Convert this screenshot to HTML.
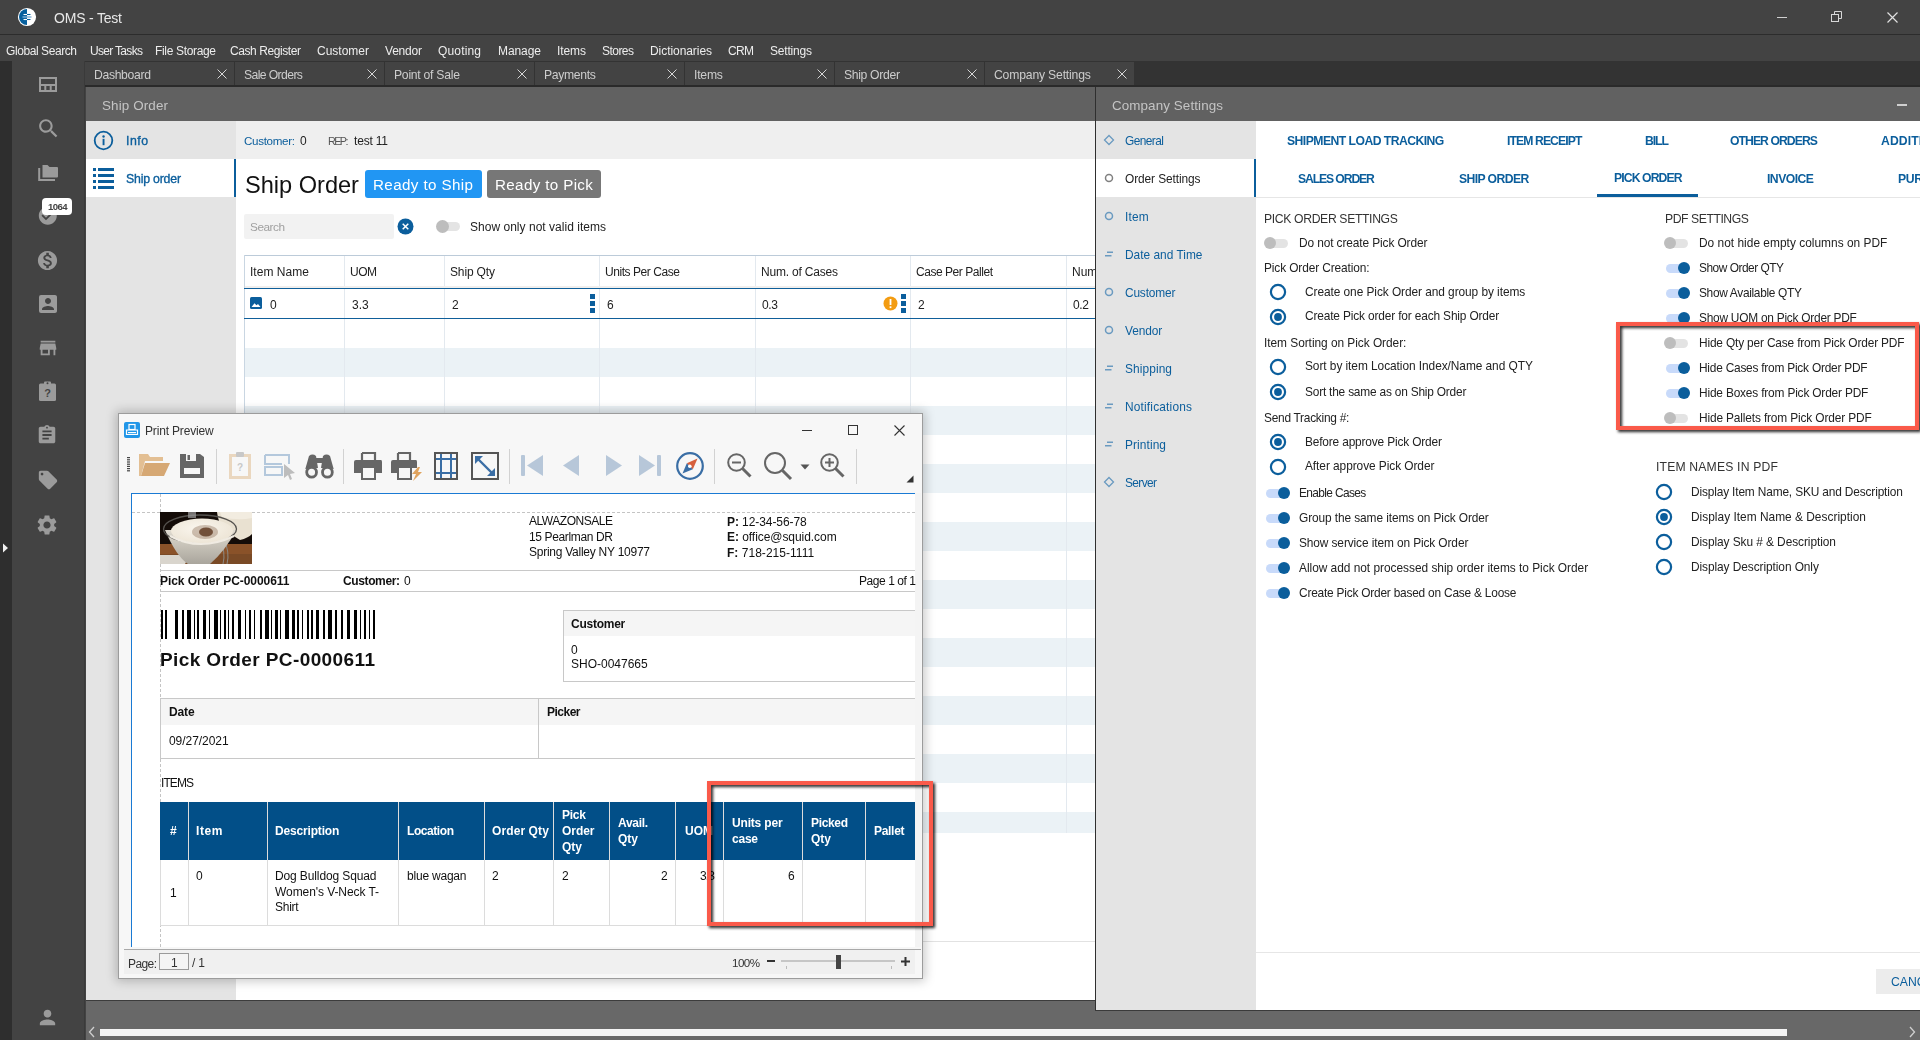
<!DOCTYPE html>
<html><head><meta charset="utf-8"><title>OMS - Test</title>
<style>
html,body{margin:0;padding:0;width:1920px;height:1040px;overflow:hidden;background:#434343;}
body{position:relative;font-family:"Liberation Sans",sans-serif;-webkit-font-smoothing:antialiased;}
.t{will-change:transform;}
.r{position:absolute;display:block;}
.t{position:absolute;white-space:nowrap;line-height:1;}
svg.r{overflow:visible;}
</style></head><body>
<div class="r" style="left:0px;top:0px;width:1920px;height:34px;background:#434343;"></div>
<div class="r" style="left:0px;top:34px;width:1920px;height:1px;background:#2c2c2c;"></div>
<div class="r" style="left:0px;top:35px;width:1920px;height:26px;background:#434343;"></div>
<svg class="r" style="left:17px;top:7px;" width="20" height="20" viewBox="0 0 20 20"><circle cx="10" cy="10" r="9.1" fill="#ffffff"/><path d="M10 2 A8 8 0 0 0 10 18 Z" fill="#07609e"/><path d="M6.5 7.5 H10" stroke="#fff" stroke-width="1.1"/><path d="M10 7.5 H13.5" stroke="#07609e" stroke-width="1.1"/><path d="M5.5 10 H14.5" stroke="#7fb0d6" stroke-width="1.4"/><path d="M6.5 12.5 H10" stroke="#fff" stroke-width="1.1"/><path d="M10 12.5 H13.5" stroke="#07609e" stroke-width="1.1"/></svg>
<div class="t" style="left:54.00px;top:11.00px;font-size:14px;color:#e8e8e8;font-weight:normal;letter-spacing:-0.194px;">OMS - Test</div>
<div class="r" style="left:1777px;top:17px;width:10px;height:1px;background:#d0d0d0;"></div>
<svg class="r" style="left:1831px;top:11px;" width="12" height="12" viewBox="0 0 12 12"><rect x="0.5" y="3.5" width="7" height="7" fill="none" stroke="#d8d8d8"/><path d="M3.5 3.5 V0.5 H10.5 V7.5 H7.5" fill="none" stroke="#d8d8d8"/></svg>
<svg class="r" style="left:1887px;top:12px;" width="11" height="11" viewBox="0 0 11 11"><path d="M0.5 0.5 L10.5 10.5 M10.5 0.5 L0.5 10.5" stroke="#e0e0e0" stroke-width="1.2"/></svg>
<div class="t" style="left:6.00px;top:45.00px;font-size:12px;color:#ededed;font-weight:normal;letter-spacing:-0.420px;">Global Search</div>
<div class="t" style="left:90.00px;top:45.00px;font-size:12px;color:#ededed;font-weight:normal;letter-spacing:-0.680px;">User Tasks</div>
<div class="t" style="left:155.00px;top:45.00px;font-size:12px;color:#ededed;font-weight:normal;letter-spacing:-0.337px;">File Storage</div>
<div class="t" style="left:230.00px;top:45.00px;font-size:12px;color:#ededed;font-weight:normal;letter-spacing:-0.419px;">Cash Register</div>
<div class="t" style="left:317.00px;top:45.00px;font-size:12px;color:#ededed;font-weight:normal;letter-spacing:-0.003px;">Customer</div>
<div class="t" style="left:385.00px;top:45.00px;font-size:12px;color:#ededed;font-weight:normal;letter-spacing:-0.206px;">Vendor</div>
<div class="t" style="left:438.00px;top:45.00px;font-size:12px;color:#ededed;font-weight:normal;letter-spacing:0.163px;">Quoting</div>
<div class="t" style="left:498.00px;top:45.00px;font-size:12px;color:#ededed;font-weight:normal;letter-spacing:-0.074px;">Manage</div>
<div class="t" style="left:557.00px;top:45.00px;font-size:12px;color:#ededed;font-weight:normal;letter-spacing:-0.085px;">Items</div>
<div class="t" style="left:602.00px;top:45.00px;font-size:12px;color:#ededed;font-weight:normal;letter-spacing:-0.536px;">Stores</div>
<div class="t" style="left:650.00px;top:45.00px;font-size:12px;color:#ededed;font-weight:normal;letter-spacing:-0.063px;">Dictionaries</div>
<div class="t" style="left:728.00px;top:45.00px;font-size:12px;color:#ededed;font-weight:normal;letter-spacing:-0.662px;">CRM</div>
<div class="t" style="left:770.00px;top:45.00px;font-size:12px;color:#ededed;font-weight:normal;letter-spacing:-0.194px;">Settings</div>
<div class="r" style="left:0px;top:61px;width:12px;height:979px;background:#2e2e2e;"></div>
<div class="r" style="left:12px;top:61px;width:73px;height:979px;background:#434343;"></div>
<div class="r" style="left:84px;top:61px;width:1px;height:979px;background:#3a3a3a;"></div>
<div class="r" style="left:85px;top:61px;width:1835px;height:26px;background:#333333;"></div>
<div class="r" style="left:85px;top:62px;width:149px;height:23px;background:#434343;"></div>
<div class="t" style="left:93.50px;top:69.00px;font-size:12.2px;color:#cdcdcd;font-weight:normal;letter-spacing:-0.335px;">Dashboard</div>
<svg class="r" style="left:217px;top:69px;" width="10" height="10" viewBox="0 0 10 10"><path d="M0.5 0.5 L9.5 9.5 M9.5 0.5 L0.5 9.5" stroke="#d6d6d6" stroke-width="1"/></svg>
<div class="r" style="left:235px;top:62px;width:149px;height:23px;background:#434343;"></div>
<div class="t" style="left:243.50px;top:69.00px;font-size:12.2px;color:#cdcdcd;font-weight:normal;letter-spacing:-0.609px;">Sale Orders</div>
<svg class="r" style="left:367px;top:69px;" width="10" height="10" viewBox="0 0 10 10"><path d="M0.5 0.5 L9.5 9.5 M9.5 0.5 L0.5 9.5" stroke="#d6d6d6" stroke-width="1"/></svg>
<div class="r" style="left:385px;top:62px;width:149px;height:23px;background:#434343;"></div>
<div class="t" style="left:393.50px;top:69.00px;font-size:12.2px;color:#cdcdcd;font-weight:normal;letter-spacing:-0.265px;">Point of Sale</div>
<svg class="r" style="left:517px;top:69px;" width="10" height="10" viewBox="0 0 10 10"><path d="M0.5 0.5 L9.5 9.5 M9.5 0.5 L0.5 9.5" stroke="#d6d6d6" stroke-width="1"/></svg>
<div class="r" style="left:535px;top:62px;width:149px;height:23px;background:#434343;"></div>
<div class="t" style="left:543.50px;top:69.00px;font-size:12.2px;color:#cdcdcd;font-weight:normal;letter-spacing:-0.320px;">Payments</div>
<svg class="r" style="left:667px;top:69px;" width="10" height="10" viewBox="0 0 10 10"><path d="M0.5 0.5 L9.5 9.5 M9.5 0.5 L0.5 9.5" stroke="#d6d6d6" stroke-width="1"/></svg>
<div class="r" style="left:685px;top:62px;width:149px;height:23px;background:#434343;"></div>
<div class="t" style="left:693.50px;top:69.00px;font-size:12.2px;color:#cdcdcd;font-weight:normal;letter-spacing:-0.207px;">Items</div>
<svg class="r" style="left:817px;top:69px;" width="10" height="10" viewBox="0 0 10 10"><path d="M0.5 0.5 L9.5 9.5 M9.5 0.5 L0.5 9.5" stroke="#d6d6d6" stroke-width="1"/></svg>
<div class="r" style="left:835px;top:62px;width:149px;height:23px;background:#434343;"></div>
<div class="t" style="left:843.50px;top:69.00px;font-size:12.2px;color:#cdcdcd;font-weight:normal;letter-spacing:-0.332px;">Ship Order</div>
<svg class="r" style="left:967px;top:69px;" width="10" height="10" viewBox="0 0 10 10"><path d="M0.5 0.5 L9.5 9.5 M9.5 0.5 L0.5 9.5" stroke="#d6d6d6" stroke-width="1"/></svg>
<div class="r" style="left:985px;top:62px;width:149px;height:23px;background:#434343;"></div>
<div class="t" style="left:993.50px;top:69.00px;font-size:12.2px;color:#cdcdcd;font-weight:normal;letter-spacing:-0.179px;">Company Settings</div>
<svg class="r" style="left:1117px;top:69px;" width="10" height="10" viewBox="0 0 10 10"><path d="M0.5 0.5 L9.5 9.5 M9.5 0.5 L0.5 9.5" stroke="#d6d6d6" stroke-width="1"/></svg>
<div class="r" style="left:85px;top:85px;width:1835px;height:2px;background:#2a2a2a;"></div>
<div class="r" style="left:86px;top:87px;width:1009px;height:34px;background:#616161;"></div>
<div class="t" style="left:102.00px;top:99.00px;font-size:13.4px;color:#c4c4c4;font-weight:normal;letter-spacing:0.135px;">Ship Order</div>
<div class="r" style="left:86px;top:121px;width:1009px;height:879px;background:#ffffff;"></div>
<div class="r" style="left:86px;top:121px;width:150px;height:879px;background:#e4e4e4;"></div>
<div class="r" style="left:86px;top:159px;width:148px;height:38px;background:#ffffff;"></div>
<div class="r" style="left:234px;top:159px;width:2px;height:38px;background:#0b5e9c;"></div>
<div class="r" style="left:236px;top:121px;width:859px;height:38px;background:#efefef;"></div>
<svg class="r" style="left:93px;top:130px;" width="21" height="21" viewBox="0 0 21 21"><circle cx="10.5" cy="10.5" r="8.8" fill="none" stroke="#0b5e9c" stroke-width="1.8"/><rect x="9.6" y="8.8" width="1.9" height="6.4" fill="#0b5e9c"/><circle cx="10.55" cy="6.5" r="1.2" fill="#0b5e9c"/></svg>
<div class="t" style="left:126.00px;top:135.00px;font-size:12.3px;color:#0b5e9c;font-weight:normal;letter-spacing:0.495px;-webkit-text-stroke:0.35px #0b5e9c">Info</div>
<svg class="r" style="left:93px;top:168px;" width="21" height="21" viewBox="0 0 21 21"><g fill="#0b5e9c"><rect x="0" y="0" width="3" height="3"/><rect x="5" y="0" width="16" height="3"/><rect x="0" y="6" width="3" height="3"/><rect x="5" y="6" width="16" height="3"/><rect x="0" y="12" width="3" height="3"/><rect x="5" y="12" width="16" height="3"/><rect x="0" y="18" width="3" height="3"/><rect x="5" y="18" width="16" height="3"/></g></svg>
<div class="t" style="left:126.00px;top:173.00px;font-size:12.3px;color:#0b5e9c;font-weight:normal;letter-spacing:-0.195px;-webkit-text-stroke:0.35px #0b5e9c">Ship order</div>
<div class="t" style="left:244.00px;top:135.00px;font-size:11.6px;color:#0b5e9c;font-weight:normal;letter-spacing:-0.312px;">Customer:</div>
<div class="t" style="left:300.00px;top:135.00px;font-size:12px;color:#222;font-weight:normal;">0</div>
<div class="t" style="left:327.50px;top:136.00px;font-size:10.8px;color:#555;font-weight:normal;letter-spacing:-1.569px;">REP:</div>
<div class="t" style="left:354.00px;top:135.00px;font-size:12px;color:#222;font-weight:normal;letter-spacing:-0.189px;">test 11</div>
<div class="t" style="left:245.00px;top:174.00px;font-size:23.6px;color:#111;font-weight:normal;letter-spacing:-0.012px;">Ship Order</div>
<div class="r" style="left:365px;top:170px;width:117px;height:28px;background:#2196f3;border-radius:3px"></div>
<div class="t" style="left:373.40px;top:177.00px;font-size:15.2px;color:#ffffff;font-weight:normal;letter-spacing:0.376px;">Ready to Ship</div>
<div class="r" style="left:487px;top:170px;width:114px;height:28px;background:#777777;border-radius:3px"></div>
<div class="t" style="left:495.40px;top:177.00px;font-size:15.2px;color:#ffffff;font-weight:normal;letter-spacing:0.350px;">Ready to Pick</div>
<div class="r" style="left:244px;top:214px;width:150px;height:25px;background:#f2f2f2;border-radius:2px"></div>
<div class="t" style="left:250.00px;top:222.00px;font-size:11.8px;color:#a0a0a0;font-weight:normal;letter-spacing:-0.476px;">Search</div>
<svg class="r" style="left:397px;top:218px;" width="17" height="17" viewBox="0 0 17 17"><circle cx="8.5" cy="8.5" r="8" fill="#0b5e9c"/><path d="M5.7 5.7 L11.3 11.3 M11.3 5.7 L5.7 11.3" stroke="#fff" stroke-width="1.5"/></svg>
<div class="r" style="left:437px;top:222px;width:23px;height:9px;background:#e4e4e4;border-radius:5px"></div>
<div class="r" style="left:436px;top:220px;width:13px;height:13px;border-radius:50%;background:#bdbdbd"></div>
<div class="t" style="left:470.00px;top:221.00px;font-size:12px;color:#222;font-weight:normal;letter-spacing:0.025px;">Show only not valid items</div>
<div class="r" style="left:244px;top:255px;width:851px;height:1px;background:#bccbd9;"></div>
<div class="r" style="left:244px;top:255px;width:1px;height:578px;background:#c9d6e2;"></div>
<div class="t" style="left:250.00px;top:266.00px;font-size:12px;color:#222;font-weight:normal;letter-spacing:0.040px;">Item Name</div>
<div class="t" style="left:350.00px;top:266.00px;font-size:12px;color:#222;font-weight:normal;letter-spacing:-0.498px;">UOM</div>
<div class="t" style="left:450.00px;top:266.00px;font-size:12px;color:#222;font-weight:normal;letter-spacing:-0.146px;">Ship Qty</div>
<div class="t" style="left:605.00px;top:266.00px;font-size:12px;color:#222;font-weight:normal;letter-spacing:-0.438px;">Units Per Case</div>
<div class="t" style="left:761.00px;top:266.00px;font-size:12px;color:#222;font-weight:normal;letter-spacing:-0.196px;">Num. of Cases</div>
<div class="t" style="left:916.00px;top:266.00px;font-size:12px;color:#222;font-weight:normal;letter-spacing:-0.455px;">Case Per Pallet</div>
<div class="t" style="left:1072.00px;top:266.00px;font-size:12px;color:#222;font-weight:normal;">Num</div>
<div class="r" style="left:245px;top:348px;width:850px;height:29px;background:#ebf2f6;"></div>
<div class="r" style="left:245px;top:406px;width:850px;height:29px;background:#ebf2f6;"></div>
<div class="r" style="left:245px;top:464px;width:850px;height:29px;background:#ebf2f6;"></div>
<div class="r" style="left:245px;top:522px;width:850px;height:29px;background:#ebf2f6;"></div>
<div class="r" style="left:245px;top:580px;width:850px;height:29px;background:#ebf2f6;"></div>
<div class="r" style="left:245px;top:638px;width:850px;height:29px;background:#ebf2f6;"></div>
<div class="r" style="left:245px;top:696px;width:850px;height:29px;background:#ebf2f6;"></div>
<div class="r" style="left:245px;top:754px;width:850px;height:29px;background:#ebf2f6;"></div>
<div class="r" style="left:245px;top:812px;width:850px;height:21px;background:#ebf2f6;"></div>
<div class="r" style="left:344px;top:256px;width:1px;height:577px;background:#e3e9ef;"></div>
<div class="r" style="left:444px;top:256px;width:1px;height:577px;background:#e3e9ef;"></div>
<div class="r" style="left:599px;top:256px;width:1px;height:577px;background:#e3e9ef;"></div>
<div class="r" style="left:755px;top:256px;width:1px;height:577px;background:#e3e9ef;"></div>
<div class="r" style="left:910px;top:256px;width:1px;height:577px;background:#e3e9ef;"></div>
<div class="r" style="left:1066px;top:256px;width:1px;height:577px;background:#e3e9ef;"></div>
<div class="r" style="left:245px;top:286px;width:850px;height:2px;background:#f1efed;"></div>
<div class="r" style="left:244px;top:288px;width:851px;height:1px;background:#0f5f9a;"></div>
<div class="r" style="left:244px;top:318px;width:851px;height:1px;background:#0f5f9a;"></div>
<svg class="r" style="left:250px;top:297px;" width="13" height="13" viewBox="0 0 13 13"><rect x="0" y="0" width="12" height="12" rx="1.5" fill="#0b5e9c"/><path d="M1.5 10 L4.5 6.2 L6.5 8.2 L8 7 L10.5 10 Z" fill="#fff"/></svg>
<div class="t" style="left:269.50px;top:299.00px;font-size:12px;color:#222;font-weight:normal;">0</div>
<div class="t" style="left:352.00px;top:299.00px;font-size:12px;color:#222;font-weight:normal;">3.3</div>
<div class="t" style="left:451.50px;top:299.00px;font-size:12px;color:#222;font-weight:normal;">2</div>
<svg class="r" style="left:590px;top:294px;" width="5" height="19" viewBox="0 0 5 19"><rect x="0" y="0" width="5" height="5" fill="#0b5e9c"/><rect x="0" y="7" width="5" height="5" fill="#0b5e9c"/><rect x="0" y="14" width="5" height="5" fill="#0b5e9c"/></svg>
<div class="t" style="left:606.50px;top:299.00px;font-size:12px;color:#222;font-weight:normal;">6</div>
<div class="t" style="left:762.00px;top:299.00px;font-size:12px;color:#222;font-weight:normal;letter-spacing:-0.340px;">0.3</div>
<svg class="r" style="left:883px;top:296px;" width="15" height="15" viewBox="0 0 15 15"><circle cx="7.5" cy="7.5" r="7" fill="#f39c12"/><rect x="6.6" y="3" width="1.8" height="6" fill="#fff"/><rect x="6.6" y="10.3" width="1.8" height="1.8" fill="#fff"/></svg>
<svg class="r" style="left:901px;top:294px;" width="5" height="19" viewBox="0 0 5 19"><rect x="0" y="0" width="5" height="5" fill="#0b5e9c"/><rect x="0" y="7" width="5" height="5" fill="#0b5e9c"/><rect x="0" y="14" width="5" height="5" fill="#0b5e9c"/></svg>
<div class="t" style="left:917.50px;top:299.00px;font-size:12px;color:#222;font-weight:normal;">2</div>
<div class="t" style="left:1073.00px;top:299.00px;font-size:12px;color:#222;font-weight:normal;letter-spacing:-0.340px;">0.2</div>
<div class="r" style="left:236px;top:941px;width:859px;height:1px;background:#e2e2e2;"></div>
<div class="r" style="left:1095px;top:87px;width:1px;height:924px;background:#2f2f2f;"></div>
<div class="r" style="left:86px;top:1001px;width:1009px;height:39px;background:#686868;"></div>
<div class="r" style="left:86px;top:1000px;width:1009px;height:1px;background:#3c3c3c;"></div>
<div class="r" style="left:1096px;top:87px;width:824px;height:34px;background:#616161;"></div>
<div class="t" style="left:1112.00px;top:99.00px;font-size:13.4px;color:#c4c4c4;font-weight:normal;letter-spacing:0.101px;">Company Settings</div>
<div class="r" style="left:1897px;top:104px;width:10px;height:2px;background:#cfcfcf;"></div>
<div class="r" style="left:1096px;top:121px;width:824px;height:889px;background:#ffffff;"></div>
<div class="r" style="left:1096px;top:121px;width:160px;height:889px;background:#e4e4e4;"></div>
<div class="r" style="left:1096px;top:159px;width:158px;height:38px;background:#ffffff;"></div>
<div class="r" style="left:1254px;top:159px;width:2px;height:38px;background:#0b5e9c;"></div>
<div class="r" style="left:1086px;top:1011px;width:834px;height:29px;background:#686868;"></div>
<div class="r" style="left:1095px;top:1010px;width:825px;height:1px;background:#3a3a3a;"></div>
<svg class="r" style="left:1103px;top:134px;" width="12" height="12" viewBox="0 0 12 12"><path d="M6 1.5 L10.5 6 L6 10.5 L1.5 6 Z" fill="none" stroke="#6a9ac0" stroke-width="1.3"/></svg>
<div class="t" style="left:1124.50px;top:136.00px;font-size:11.9px;color:#0b5e9c;font-weight:normal;letter-spacing:-0.557px;">General</div>
<svg class="r" style="left:1103px;top:172px;" width="12" height="12" viewBox="0 0 12 12"><circle cx="6" cy="6" r="3.5" fill="none" stroke="#808080" stroke-width="1.5"/></svg>
<div class="t" style="left:1124.50px;top:174.00px;font-size:11.9px;color:#222;font-weight:normal;letter-spacing:-0.086px;">Order Settings</div>
<svg class="r" style="left:1103px;top:210px;" width="12" height="12" viewBox="0 0 12 12"><circle cx="6" cy="6" r="3.5" fill="none" stroke="#6a9ac0" stroke-width="1.5"/></svg>
<div class="t" style="left:1124.50px;top:212.00px;font-size:11.9px;color:#0b5e9c;font-weight:normal;letter-spacing:0.185px;">Item</div>
<svg class="r" style="left:1103px;top:248px;" width="12" height="12" viewBox="0 0 12 12"><path d="M4 4.3 H10 M2 7.7 H8.5" stroke="#6a9ac0" stroke-width="1.4"/></svg>
<div class="t" style="left:1124.50px;top:250.00px;font-size:11.9px;color:#0b5e9c;font-weight:normal;letter-spacing:0.010px;">Date and Time</div>
<svg class="r" style="left:1103px;top:286px;" width="12" height="12" viewBox="0 0 12 12"><circle cx="6" cy="6" r="3.5" fill="none" stroke="#6a9ac0" stroke-width="1.5"/></svg>
<div class="t" style="left:1124.50px;top:288.00px;font-size:11.9px;color:#0b5e9c;font-weight:normal;letter-spacing:-0.170px;">Customer</div>
<svg class="r" style="left:1103px;top:324px;" width="12" height="12" viewBox="0 0 12 12"><circle cx="6" cy="6" r="3.5" fill="none" stroke="#6a9ac0" stroke-width="1.5"/></svg>
<div class="t" style="left:1124.50px;top:326.00px;font-size:11.9px;color:#0b5e9c;font-weight:normal;letter-spacing:-0.082px;">Vendor</div>
<svg class="r" style="left:1103px;top:362px;" width="12" height="12" viewBox="0 0 12 12"><path d="M4 4.3 H10 M2 7.7 H8.5" stroke="#6a9ac0" stroke-width="1.4"/></svg>
<div class="t" style="left:1124.50px;top:364.00px;font-size:11.9px;color:#0b5e9c;font-weight:normal;letter-spacing:0.098px;">Shipping</div>
<svg class="r" style="left:1103px;top:400px;" width="12" height="12" viewBox="0 0 12 12"><path d="M4 4.3 H10 M2 7.7 H8.5" stroke="#6a9ac0" stroke-width="1.4"/></svg>
<div class="t" style="left:1124.50px;top:402.00px;font-size:11.9px;color:#0b5e9c;font-weight:normal;letter-spacing:0.182px;">Notifications</div>
<svg class="r" style="left:1103px;top:438px;" width="12" height="12" viewBox="0 0 12 12"><path d="M4 4.3 H10 M2 7.7 H8.5" stroke="#6a9ac0" stroke-width="1.4"/></svg>
<div class="t" style="left:1124.50px;top:440.00px;font-size:11.9px;color:#0b5e9c;font-weight:normal;letter-spacing:0.092px;">Printing</div>
<svg class="r" style="left:1103px;top:476px;" width="12" height="12" viewBox="0 0 12 12"><path d="M6 1.5 L10.5 6 L6 10.5 L1.5 6 Z" fill="none" stroke="#6a9ac0" stroke-width="1.3"/></svg>
<div class="t" style="left:1124.50px;top:478.00px;font-size:11.9px;color:#0b5e9c;font-weight:normal;letter-spacing:-0.609px;">Server</div>
<div class="t" style="left:1287.00px;top:135.00px;font-size:12.2px;color:#0b5e9c;font-weight:bold;letter-spacing:-0.536px;">SHIPMENT LOAD TRACKING</div>
<div class="t" style="left:1507.00px;top:135.00px;font-size:12.2px;color:#0b5e9c;font-weight:bold;letter-spacing:-0.901px;">ITEM RECEIPT</div>
<div class="t" style="left:1645.00px;top:135.00px;font-size:12.2px;color:#0b5e9c;font-weight:bold;letter-spacing:-1.036px;">BILL</div>
<div class="t" style="left:1730.00px;top:135.00px;font-size:12.2px;color:#0b5e9c;font-weight:bold;letter-spacing:-0.935px;">OTHER ORDERS</div>
<div class="t" style="left:1881.00px;top:135.00px;font-size:12.2px;color:#0b5e9c;font-weight:bold;letter-spacing:0.086px;">ADDITIONAL</div>
<div class="t" style="left:1298.00px;top:173.00px;font-size:12.2px;color:#0b5e9c;font-weight:bold;letter-spacing:-1.112px;">SALES ORDER</div>
<div class="t" style="left:1459.00px;top:173.00px;font-size:12.2px;color:#0b5e9c;font-weight:bold;letter-spacing:-0.600px;">SHIP ORDER</div>
<div class="t" style="left:1614.00px;top:172.00px;font-size:12.2px;color:#0b5e9c;font-weight:bold;letter-spacing:-0.888px;">PICK ORDER</div>
<div class="t" style="left:1767.00px;top:173.00px;font-size:12.2px;color:#0b5e9c;font-weight:bold;letter-spacing:-0.528px;">INVOICE</div>
<div class="t" style="left:1898.00px;top:173.00px;font-size:12.2px;color:#0b5e9c;font-weight:bold;letter-spacing:-0.352px;">PURCHASE</div>
<div class="r" style="left:1597px;top:194px;width:101px;height:3px;background:#0b5e9c;"></div>
<div class="r" style="left:1256px;top:197px;width:664px;height:1px;background:#e6e6e6;"></div>
<div class="t" style="left:1264.00px;top:213.00px;font-size:12.2px;color:#333;font-weight:normal;letter-spacing:-0.351px;">PICK ORDER SETTINGS</div>
<div class="r" style="left:1268px;top:238.5px;width:20px;height:9px;background:#e3e3e3;border-radius:5px"></div>
<div class="r" style="left:1264px;top:237px;width:12px;height:12px;border-radius:50%;background:#bdbdbd"></div>
<div class="t" style="left:1298.50px;top:238.00px;font-size:11.9px;color:#222;font-weight:normal;letter-spacing:-0.106px;">Do not create Pick Order</div>
<div class="t" style="left:1264.00px;top:263.00px;font-size:11.9px;color:#222;font-weight:normal;letter-spacing:-0.116px;">Pick Order Creation:</div>
<svg class="r" style="left:1269px;top:282.5px;" width="18" height="18" viewBox="0 0 18 18"><circle cx="9" cy="9" r="7.1" fill="#fff" stroke="#0b5e9c" stroke-width="2.2"/></svg>
<div class="t" style="left:1304.60px;top:287.00px;font-size:11.9px;color:#222;font-weight:normal;letter-spacing:-0.064px;">Create one Pick Order and group by items</div>
<svg class="r" style="left:1269px;top:307.5px;" width="18" height="18" viewBox="0 0 18 18"><circle cx="9" cy="9" r="7.1" fill="#fff" stroke="#0b5e9c" stroke-width="2.2"/><circle cx="9" cy="9" r="3.9" fill="#0b5e9c"/></svg>
<div class="t" style="left:1304.60px;top:311.00px;font-size:11.9px;color:#222;font-weight:normal;letter-spacing:-0.148px;">Create Pick order for each Ship Order</div>
<div class="t" style="left:1264.00px;top:338.00px;font-size:11.9px;color:#222;font-weight:normal;letter-spacing:-0.039px;">Item Sorting on Pick Order:</div>
<svg class="r" style="left:1269px;top:357.5px;" width="18" height="18" viewBox="0 0 18 18"><circle cx="9" cy="9" r="7.1" fill="#fff" stroke="#0b5e9c" stroke-width="2.2"/></svg>
<div class="t" style="left:1304.60px;top:361.00px;font-size:11.9px;color:#222;font-weight:normal;letter-spacing:-0.056px;">Sort by item Location Index/Name and QTY</div>
<svg class="r" style="left:1269px;top:382.5px;" width="18" height="18" viewBox="0 0 18 18"><circle cx="9" cy="9" r="7.1" fill="#fff" stroke="#0b5e9c" stroke-width="2.2"/><circle cx="9" cy="9" r="3.9" fill="#0b5e9c"/></svg>
<div class="t" style="left:1304.60px;top:387.00px;font-size:11.9px;color:#222;font-weight:normal;letter-spacing:-0.202px;">Sort the same as on Ship Order</div>
<div class="t" style="left:1264.00px;top:413.00px;font-size:11.9px;color:#222;font-weight:normal;letter-spacing:-0.260px;">Send Tracking #:</div>
<svg class="r" style="left:1269px;top:432.5px;" width="18" height="18" viewBox="0 0 18 18"><circle cx="9" cy="9" r="7.1" fill="#fff" stroke="#0b5e9c" stroke-width="2.2"/><circle cx="9" cy="9" r="3.9" fill="#0b5e9c"/></svg>
<div class="t" style="left:1304.60px;top:437.00px;font-size:11.9px;color:#222;font-weight:normal;letter-spacing:-0.162px;">Before approve Pick Order</div>
<svg class="r" style="left:1269px;top:457.5px;" width="18" height="18" viewBox="0 0 18 18"><circle cx="9" cy="9" r="7.1" fill="#fff" stroke="#0b5e9c" stroke-width="2.2"/></svg>
<div class="t" style="left:1304.60px;top:461.00px;font-size:11.9px;color:#222;font-weight:normal;letter-spacing:-0.063px;">After approve Pick Order</div>
<div class="r" style="left:1266px;top:488.5px;width:20px;height:9px;background:#c8dafa;border-radius:5px"></div>
<div class="r" style="left:1278px;top:487px;width:12px;height:12px;border-radius:50%;background:#0b5e9c"></div>
<div class="t" style="left:1298.50px;top:488.00px;font-size:11.9px;color:#222;font-weight:normal;letter-spacing:-0.617px;">Enable Cases</div>
<div class="r" style="left:1266px;top:513.5px;width:20px;height:9px;background:#c8dafa;border-radius:5px"></div>
<div class="r" style="left:1278px;top:512px;width:12px;height:12px;border-radius:50%;background:#0b5e9c"></div>
<div class="t" style="left:1298.50px;top:513.00px;font-size:11.9px;color:#222;font-weight:normal;letter-spacing:-0.095px;">Group the same items on Pick Order</div>
<div class="r" style="left:1266px;top:538.5px;width:20px;height:9px;background:#c8dafa;border-radius:5px"></div>
<div class="r" style="left:1278px;top:537px;width:12px;height:12px;border-radius:50%;background:#0b5e9c"></div>
<div class="t" style="left:1298.50px;top:538.00px;font-size:11.9px;color:#222;font-weight:normal;letter-spacing:-0.104px;">Show service item on Pick Order</div>
<div class="r" style="left:1266px;top:563.5px;width:20px;height:9px;background:#c8dafa;border-radius:5px"></div>
<div class="r" style="left:1278px;top:562px;width:12px;height:12px;border-radius:50%;background:#0b5e9c"></div>
<div class="t" style="left:1298.50px;top:563.00px;font-size:11.9px;color:#222;font-weight:normal;letter-spacing:-0.018px;">Allow add not processed ship order items to Pick Order</div>
<div class="r" style="left:1266px;top:588.5px;width:20px;height:9px;background:#c8dafa;border-radius:5px"></div>
<div class="r" style="left:1278px;top:587px;width:12px;height:12px;border-radius:50%;background:#0b5e9c"></div>
<div class="t" style="left:1298.50px;top:588.00px;font-size:11.9px;color:#222;font-weight:normal;letter-spacing:-0.210px;">Create Pick Order based on Case &amp; Loose</div>
<div class="t" style="left:1664.80px;top:213.00px;font-size:12.2px;color:#333;font-weight:normal;letter-spacing:-0.436px;">PDF SETTINGS</div>
<div class="r" style="left:1668px;top:238.5px;width:20px;height:9px;background:#e3e3e3;border-radius:5px"></div>
<div class="r" style="left:1664px;top:237px;width:12px;height:12px;border-radius:50%;background:#bdbdbd"></div>
<div class="t" style="left:1698.50px;top:238.00px;font-size:11.9px;color:#222;font-weight:normal;letter-spacing:0.021px;">Do not hide empty columns on PDF</div>
<div class="r" style="left:1666px;top:263.5px;width:20px;height:9px;background:#c8dafa;border-radius:5px"></div>
<div class="r" style="left:1678px;top:262px;width:12px;height:12px;border-radius:50%;background:#0b5e9c"></div>
<div class="t" style="left:1698.50px;top:263.00px;font-size:11.9px;color:#222;font-weight:normal;letter-spacing:-0.482px;">Show Order QTY</div>
<div class="r" style="left:1666px;top:288.5px;width:20px;height:9px;background:#c8dafa;border-radius:5px"></div>
<div class="r" style="left:1678px;top:287px;width:12px;height:12px;border-radius:50%;background:#0b5e9c"></div>
<div class="t" style="left:1698.50px;top:288.00px;font-size:11.9px;color:#222;font-weight:normal;letter-spacing:-0.310px;">Show Available QTY</div>
<div class="r" style="left:1666px;top:313.5px;width:20px;height:9px;background:#c8dafa;border-radius:5px"></div>
<div class="r" style="left:1678px;top:312px;width:12px;height:12px;border-radius:50%;background:#0b5e9c"></div>
<div class="t" style="left:1698.50px;top:313.00px;font-size:11.9px;color:#222;font-weight:normal;letter-spacing:-0.240px;">Show UOM on Pick Order PDF</div>
<div class="r" style="left:1668px;top:338.5px;width:20px;height:9px;background:#e3e3e3;border-radius:5px"></div>
<div class="r" style="left:1664px;top:337px;width:12px;height:12px;border-radius:50%;background:#bdbdbd"></div>
<div class="t" style="left:1698.50px;top:338.00px;font-size:11.9px;color:#222;font-weight:normal;letter-spacing:-0.164px;">Hide Qty per Case from Pick Order PDF</div>
<div class="r" style="left:1666px;top:363.5px;width:20px;height:9px;background:#c8dafa;border-radius:5px"></div>
<div class="r" style="left:1678px;top:362px;width:12px;height:12px;border-radius:50%;background:#0b5e9c"></div>
<div class="t" style="left:1698.50px;top:363.00px;font-size:11.9px;color:#222;font-weight:normal;letter-spacing:-0.225px;">Hide Cases from Pick Order PDF</div>
<div class="r" style="left:1666px;top:388.5px;width:20px;height:9px;background:#c8dafa;border-radius:5px"></div>
<div class="r" style="left:1678px;top:387px;width:12px;height:12px;border-radius:50%;background:#0b5e9c"></div>
<div class="t" style="left:1698.50px;top:388.00px;font-size:11.9px;color:#222;font-weight:normal;letter-spacing:-0.175px;">Hide Boxes from Pick Order PDF</div>
<div class="r" style="left:1668px;top:413.5px;width:20px;height:9px;background:#e3e3e3;border-radius:5px"></div>
<div class="r" style="left:1664px;top:412px;width:12px;height:12px;border-radius:50%;background:#bdbdbd"></div>
<div class="t" style="left:1698.50px;top:413.00px;font-size:11.9px;color:#222;font-weight:normal;letter-spacing:-0.143px;">Hide Pallets from Pick Order PDF</div>
<div class="t" style="left:1656.00px;top:461.00px;font-size:12.2px;color:#333;font-weight:normal;letter-spacing:0.169px;">ITEM NAMES IN PDF</div>
<svg class="r" style="left:1655px;top:483px;" width="18" height="18" viewBox="0 0 18 18"><circle cx="9" cy="9" r="7.1" fill="#fff" stroke="#0b5e9c" stroke-width="2.2"/></svg>
<div class="t" style="left:1690.50px;top:487.00px;font-size:11.9px;color:#222;font-weight:normal;letter-spacing:-0.151px;">Display Item Name, SKU and Description</div>
<svg class="r" style="left:1655px;top:508px;" width="18" height="18" viewBox="0 0 18 18"><circle cx="9" cy="9" r="7.1" fill="#fff" stroke="#0b5e9c" stroke-width="2.2"/><circle cx="9" cy="9" r="3.9" fill="#0b5e9c"/></svg>
<div class="t" style="left:1690.50px;top:512.00px;font-size:11.9px;color:#222;font-weight:normal;letter-spacing:0.014px;">Display Item Name &amp; Description</div>
<svg class="r" style="left:1655px;top:533px;" width="18" height="18" viewBox="0 0 18 18"><circle cx="9" cy="9" r="7.1" fill="#fff" stroke="#0b5e9c" stroke-width="2.2"/></svg>
<div class="t" style="left:1690.50px;top:537.00px;font-size:11.9px;color:#222;font-weight:normal;letter-spacing:-0.070px;">Display Sku # &amp; Description</div>
<svg class="r" style="left:1655px;top:558px;" width="18" height="18" viewBox="0 0 18 18"><circle cx="9" cy="9" r="7.1" fill="#fff" stroke="#0b5e9c" stroke-width="2.2"/></svg>
<div class="t" style="left:1690.50px;top:562.00px;font-size:11.9px;color:#222;font-weight:normal;letter-spacing:-0.071px;">Display Description Only</div>
<div class="r" style="left:1256px;top:952px;width:664px;height:1px;background:#e6e6e6;"></div>
<div class="r" style="left:1876px;top:969px;width:44px;height:25px;background:#ececec;"></div>
<div class="t" style="left:1891.00px;top:976.00px;font-size:12.2px;color:#0b5e9c;font-weight:normal;">CANCEL</div>
<div class="r" style="left:100px;top:1029px;width:1687px;height:7px;background:#f4f4f4;"></div>
<svg class="r" style="left:88px;top:1026px;" width="8" height="12" viewBox="0 0 8 12"><path d="M6 1 L1.5 6 L6 11" fill="none" stroke="#cfcfcf" stroke-width="1.3"/></svg>
<svg class="r" style="left:1908px;top:1026px;" width="8" height="12" viewBox="0 0 8 12"><path d="M2 1 L6.5 6 L2 11" fill="none" stroke="#cfcfcf" stroke-width="1.3"/></svg>
<svg class="r" style="left:39px;top:77px;" width="18" height="15" viewBox="0 0 18 15"><rect x="1" y="1" width="16" height="13" fill="none" stroke="#9b9b9b" stroke-width="2"/><path d="M1 8 H17 M6.3 8 V14 M11.7 8 V14" stroke="#9b9b9b" stroke-width="2"/></svg>
<svg class="r" style="left:35.5px;top:115.5px" width="25" height="25" viewBox="0 0 24 24"><path d="M15.5 14h-.79l-.28-.27C15.41 12.59 16 11.11 16 9.5 16 5.91 13.09 3 9.5 3S3 5.91 3 9.5 5.91 16 9.5 16c1.61 0 3.09-.59 4.23-1.57l.27.28v.79l5 4.99L20.49 19l-4.99-5zm-6 0C7.01 14 5 11.99 5 9.5S7.01 5 9.5 5 14 7.01 14 9.5 11.99 14 9.5 14z" fill="#9b9b9b"/></svg>
<svg class="r" style="left:38px;top:164px;" width="20" height="17" viewBox="0 0 20 17"><path d="M4.5 1 H9.5 L11.5 3 H19 Q20 3 20 4 V12.5 Q20 13.5 19 13.5 H4.5 Z" fill="#9b9b9b"/><path d="M1.2 4 V16 H17" fill="none" stroke="#9b9b9b" stroke-width="2"/></svg>
<svg class="r" style="left:37.2px;top:205.2px" width="21.6" height="21.6" viewBox="0 0 24 24"><path d="M12 2C6.48 2 2 6.48 2 12s4.48 10 10 10 10-4.48 10-10S17.52 2 12 2zm-2 15l-5-5 1.41-1.41L10 14.17l7.59-7.59L19 8l-9 9z" fill="#9b9b9b"/></svg>
<div class="r" style="left:42px;top:198px;width:30px;height:17px;background:#fff;border-radius:4px"></div>
<div class="t" style="left:47.50px;top:202.00px;font-size:9.6px;color:#444;font-weight:bold;letter-spacing:-0.620px;">1064</div>
<svg class="r" style="left:35.5px;top:248.5px" width="23" height="23" viewBox="0 0 24 24"><path d="M12 2C6.48 2 2 6.48 2 12s4.48 10 10 10 10-4.48 10-10S17.52 2 12 2zm1.41 16.09V20h-2.67v-1.93c-1.71-.36-3.16-1.46-3.27-3.4h1.96c.1 1.05.82 1.87 2.65 1.87 1.96 0 2.4-.98 2.4-1.59 0-.83-.44-1.61-2.67-2.140-2.48-.6-4.18-1.62-4.18-3.67 0-1.72 1.39-2.84 3.11-3.21V4h2.67v1.95c1.86.45 2.79 1.86 2.85 3.39H14.3c-.05-1.11-.64-1.870-2.22-1.87-1.5 0-2.4.68-2.4 1.64 0 .84.65 1.39 2.67 1.91s4.18 1.39 4.18 3.91c-.01 1.83-1.38 2.83-3.12 3.16z" fill="#9b9b9b"/></svg>
<svg class="r" style="left:36.0px;top:292.0px" width="24" height="24" viewBox="0 0 24 24"><path d="M3 5v14a2 2 0 002 2h14c1.1 0 2-.9 2-2V5c0-1.1-.9-2-2-2H5a2 2 0 00-2 2zm12 4c0 1.66-1.34 3-3 3s-3-1.34-3-3 1.34-3 3-3 3 1.34 3 3zm-9 8c0-2 4-3.1 6-3.1s6 1.1 6 3.1v1H6v-1z" fill="#9b9b9b"/></svg>
<svg class="r" style="left:37.0px;top:337.0px" width="22" height="22" viewBox="0 0 24 24"><path d="M20 4H4v2h16V4zm1 10v-2l-1-5H4l-1 5v2h1v6h10v-6h4v6h2v-6h1zm-9 4H6v-4h6v4z" fill="#9b9b9b"/></svg>
<svg class="r" style="left:39px;top:381px;" width="17" height="20" viewBox="0 0 17 20"><rect x="0" y="2.5" width="17" height="17.5" rx="1.5" fill="#9b9b9b"/><rect x="5" y="0.5" width="7" height="4" rx="1" fill="#9b9b9b"/><circle cx="8.5" cy="2.3" r="1" fill="#434343"/><text x="8.5" y="16" font-family="Liberation Sans" font-size="11" font-weight="bold" fill="#434343" text-anchor="middle">?</text></svg>
<svg class="r" style="left:36.0px;top:424.0px" width="22" height="22" viewBox="0 0 24 24"><path d="M19 3h-4.18C14.4 1.84 13.3 1 12 1c-1.3 0-2.4.84-2.82 2H5c-1.1 0-2 .9-2 2v14c0 1.1.9 2 2 2h14c1.1 0 2-.9 2-2V5c0-1.1-.9-2-2-2zm-7 0c.55 0 1 .45 1 1s-.45 1-1 1-1-.45-1-1 .45-1 1-1zm2 14H7v-2h7v2zm3-4H7v-2h10v2zm0-4H7V7h10v2z" fill="#9b9b9b"/></svg>
<svg class="r" style="left:37.0px;top:469.0px" width="22" height="22" viewBox="0 0 24 24"><path d="M21.41 11.58l-9-9C12.05 2.22 11.55 2 11 2H4c-1.1 0-2 .9-2 2v7c0 .55.22 1.05.59 1.42l9 9c.36.36.86.58 1.41.58.55 0 1.05-.22 1.41-.59l7-7c.37-.36.59-.86.59-1.41 0-.55-.23-1.06-.59-1.42zM5.5 7C4.67 7 4 6.33 4 5.5S4.67 4 5.5 4 7 4.67 7 5.5 6.33 7 5.5 7z" fill="#9b9b9b"/></svg>
<svg class="r" style="left:35.0px;top:512.5px" width="24" height="24" viewBox="0 0 24 24"><path d="M19.14 12.94c.04-.3.06-.61.06-.94 0-.32-.02-.64-.07-.94l2.03-1.58c.18-.14.23-.41.12-.61l-1.92-3.32c-.12-.22-.37-.29-.59-.22l-2.39.96c-.5-.38-1.03-.7-1.62-.94l-.36-2.54c-.04-.24-.24-.41-.48-.41h-3.84c-.24 0-.43.17-.47.41l-.36 2.54c-.59.24-1.13.57-1.62.94l-2.39-.96c-.22-.08-.47 0-.59.22L2.74 8.87c-.12.21-.08.47.12.61l2.03 1.58c-.05.3-.09.63-.09.94s.02.64.07.94l-2.030 1.58c-.18.14-.23.41-.12.61l1.92 3.32c.12.22.37.29.59.22l2.39-.96c.5.38 1.03.7 1.62.94l.36 2.54c.05.24.24.41.48.41h3.84c.24 0 .44-.17.47-.41l.36-2.54c.59-.24 1.13-.56 1.62-.94l2.39.96c.22.08.47 0 .59-.22l1.92-3.32c.12-.22.07-.47-.12-.61l-2.01-1.58zM12 15.6c-1.98 0-3.6-1.62-3.6-3.6s1.62-3.6 3.6-3.6 3.6 1.62 3.6 3.6-1.62 3.6-3.6 3.6z" fill="#9b9b9b"/></svg>
<svg class="r" style="left:2px;top:543px;" width="7" height="10" viewBox="0 0 7 10"><path d="M1 0.5 L6 5 L1 9.5 Z" fill="#f0f0f0"/></svg>
<svg class="r" style="left:35.5px;top:1005.5px" width="23" height="23" viewBox="0 0 24 24"><path d="M12 12c2.21 0 4-1.79 4-4s-1.79-4-4-4-4 1.79-4 4 1.79 4 4 4zm0 2c-2.67 0-8 1.34-8 4v2h16v-2c0-2.66-5.33-4-8-4z" fill="#9b9b9b"/></svg>
<div class="r" style="left:118px;top:413px;width:803px;height:564px;background:#f7f7f7;border:1px solid #9c9c9c;box-shadow:0 0 10px 2px rgba(0,0,0,0.22)"></div>
<svg class="r" style="left:124px;top:422px;" width="16" height="16" viewBox="0 0 16 16"><rect x="0" y="0" width="16" height="16" rx="2" fill="#2196e8"/><rect x="5" y="2.5" width="6" height="5" fill="none" stroke="#fff" stroke-width="1.2"/><path d="M2.5 8 H13.5 V12.5 H2.5 Z" fill="none" stroke="#fff" stroke-width="1.2"/><rect x="4" y="10" width="8" height="1.2" fill="#fff"/></svg>
<div class="t" style="left:145.00px;top:425.00px;font-size:12px;color:#333;font-weight:normal;letter-spacing:-0.165px;">Print Preview</div>
<div class="r" style="left:802px;top:430px;width:10px;height:1px;background:#333;"></div>
<div class="r" style="left:848px;top:425px;width:10px;height:10px;background:none;border:1px solid #333;box-sizing:border-box"></div>
<svg class="r" style="left:894px;top:425px;" width="11" height="11" viewBox="0 0 11 11"><path d="M0.5 0.5 L10.5 10.5 M10.5 0.5 L0.5 10.5" stroke="#333" stroke-width="1.1"/></svg>
<svg class="r" style="left:127px;top:457px;" width="3" height="16" viewBox="0 0 3 16"><rect x="0" y="0.0" width="3" height="1.2" fill="#444"/><rect x="0" y="2.2" width="3" height="1.2" fill="#444"/><rect x="0" y="4.4" width="3" height="1.2" fill="#444"/><rect x="0" y="6.6000000000000005" width="3" height="1.2" fill="#444"/><rect x="0" y="8.8" width="3" height="1.2" fill="#444"/><rect x="0" y="11.0" width="3" height="1.2" fill="#444"/><rect x="0" y="13.200000000000001" width="3" height="1.2" fill="#444"/></svg>
<svg class="r" style="left:139px;top:454px;" width="31" height="23" viewBox="0 0 31 23"><path d="M0 0 H9 L11 3 H24 V7 H6 L2 22 H0 Z" fill="#e3bf93"/><path d="M6 9 H31 L25 22 H2 Z" fill="#d6a874"/></svg>
<svg class="r" style="left:180px;top:454px;" width="24" height="24" viewBox="0 0 24 24"><path d="M0 0 H20 L24 3 V24 H0 Z" fill="#666"/><rect x="6" y="0" width="10" height="7" fill="#f7f7f7"/><rect x="7.5" y="1" width="2.5" height="5" fill="#666"/><rect x="4" y="14" width="16" height="6" fill="#f7f7f7"/></svg>
<div class="r" style="left:216px;top:449px;width:1px;height:35px;background:#d2d2d2;"></div>
<svg class="r" style="left:229px;top:452px;" width="22" height="27" viewBox="0 0 22 27"><rect x="1.5" y="3.5" width="19" height="22" fill="none" stroke="#ead7bf" stroke-width="3"/><rect x="7" y="0" width="8" height="5" rx="1" fill="#c8c8c8"/><text x="11" y="19" font-family="Liberation Sans" font-size="10" font-weight="bold" fill="#c8c8c8" text-anchor="middle">?</text></svg>
<svg class="r" style="left:264px;top:454px;" width="33" height="26" viewBox="0 0 33 26"><path d="M1 1 H25 V10 M1 1 V10 H18 M1 13 H18 V21 H1 Z" fill="none" stroke="#b4c8dc" stroke-width="2"/><path d="M20 10 L31 19 L26 20 L28 25 L26 26 L24 21 L20 24 Z" fill="#bdbdbd"/></svg>
<svg class="r" style="left:305px;top:454px;" width="29" height="24" viewBox="0 0 29 24"><g fill="#666"><path d="M4 2 Q7.5 -0.8 11 2 L13 14 L0.3 15 Z"/><path d="M25 2 Q21.5 -0.8 18 2 L16 14 L28.7 15 Z"/><rect x="10.5" y="4" width="8" height="5"/></g><circle cx="6.6" cy="18.2" r="4.9" fill="#f7f7f7" stroke="#666" stroke-width="2.8"/><circle cx="22.4" cy="18.2" r="4.9" fill="#f7f7f7" stroke="#666" stroke-width="2.8"/></svg>
<div class="r" style="left:343px;top:449px;width:1px;height:35px;background:#d2d2d2;"></div>
<svg class="r" style="left:354px;top:452px;" width="29" height="28" viewBox="0 0 29 28"><path d="M8 1 H21 V8" fill="none" stroke="#666" stroke-width="2.2"/><path d="M8 1 V8" stroke="#666" stroke-width="2.2"/><path d="M2 8 H27 Q28 8 28 10 V21 H0 V10 Q0 8 2 8 Z" fill="#666"/><rect x="8" y="15" width="13" height="12" fill="#f7f7f7" stroke="#666" stroke-width="2"/></svg>
<svg class="r" style="left:391px;top:452px;" width="32" height="29" viewBox="0 0 32 29"><path d="M7 1 H19 V8" fill="none" stroke="#666" stroke-width="2.2"/><path d="M7 1 V8" stroke="#666" stroke-width="2.2"/><path d="M2 8 H25 Q26 8 26 10 V16 H20 V21 H0 V10 Q0 8 2 8 Z" fill="#666"/><rect x="7" y="15" width="13" height="12" fill="#f7f7f7" stroke="#666" stroke-width="2"/><path d="M27 15 L21 22 H25 L22 29 L31 20 H27 L29 15 Z" fill="#e0a35e"/></svg>
<svg class="r" style="left:434px;top:452px;" width="24" height="28" viewBox="0 0 24 28"><rect x="1" y="1" width="22" height="26" fill="none" stroke="#555" stroke-width="2"/><path d="M7 2 V26 M17 2 V26 M2 7 H22 M2 21 H22" stroke="#3a6ea5" stroke-width="2"/></svg>
<svg class="r" style="left:471px;top:452px;" width="28" height="28" viewBox="0 0 28 28"><rect x="1" y="1" width="26" height="26" fill="none" stroke="#555" stroke-width="2"/><path d="M7 7 L21 21" stroke="#3a6ea5" stroke-width="2.4"/><path d="M4 4 H12 L4 12 Z M24 24 H16 L24 16 Z" fill="#3a6ea5"/></svg>
<div class="r" style="left:509px;top:449px;width:1px;height:35px;background:#d2d2d2;"></div>
<svg class="r" style="left:521px;top:455px;" width="23" height="21" viewBox="0 0 23 21"><rect x="0" y="0" width="4" height="21" rx="1" fill="#b7c7d9"/><path d="M22 0 V21 L6 10.5 Z" fill="#b7c7d9"/></svg>
<svg class="r" style="left:563px;top:455px;" width="17" height="21" viewBox="0 0 17 21"><path d="M16 0 V21 L0 10.5 Z" fill="#b7c7d9"/></svg>
<svg class="r" style="left:606px;top:455px;" width="17" height="21" viewBox="0 0 17 21"><path d="M0 0 V21 L16 10.5 Z" fill="#b7c7d9"/></svg>
<svg class="r" style="left:639px;top:455px;" width="23" height="21" viewBox="0 0 23 21"><rect x="18" y="0" width="4" height="21" rx="1" fill="#b7c7d9"/><path d="M0 0 V21 L16 10.5 Z" fill="#b7c7d9"/></svg>
<svg class="r" style="left:676px;top:452px;" width="28" height="28" viewBox="0 0 28 28"><circle cx="14" cy="14" r="12.8" fill="none" stroke="#3a6ea5" stroke-width="2.2"/><path d="M21.5 6.5 L10.8 11.2 L16.8 17.2 Z" fill="#d65f3c"/><path d="M6.5 21.5 L10.8 11.2 L16.8 17.2 Z" fill="#3a6ea5"/><circle cx="13.8" cy="14.2" r="1.8" fill="#fff"/></svg>
<div class="r" style="left:714px;top:449px;width:1px;height:35px;background:#d2d2d2;"></div>
<svg class="r" style="left:727px;top:453px;" width="26" height="27" viewBox="0 0 26 27"><circle cx="9.5" cy="9.5" r="8.3" fill="none" stroke="#666" stroke-width="2"/><path d="M5 9.5 H14" stroke="#666" stroke-width="2"/><path d="M15.5 15.5 L23.5 23.5" stroke="#666" stroke-width="3"/></svg>
<svg class="r" style="left:764px;top:452px;" width="29" height="29" viewBox="0 0 29 29"><circle cx="11" cy="11" r="10" fill="none" stroke="#666" stroke-width="2"/><path d="M18.5 18.5 L27 27" stroke="#666" stroke-width="3"/></svg>
<svg class="r" style="left:800px;top:464px;" width="10" height="6" viewBox="0 0 10 6"><path d="M0.5 0.5 H9.5 L5 5.5 Z" fill="#555"/></svg>
<svg class="r" style="left:820px;top:453px;" width="26" height="27" viewBox="0 0 26 27"><circle cx="9.5" cy="9.5" r="8.3" fill="none" stroke="#666" stroke-width="2"/><path d="M5 9.5 H14 M9.5 5 V14" stroke="#666" stroke-width="2"/><path d="M15.5 15.5 L23.5 23.5" stroke="#666" stroke-width="3"/></svg>
<div class="r" style="left:856px;top:449px;width:1px;height:35px;background:#d2d2d2;"></div>
<svg class="r" style="left:906px;top:475px;" width="8" height="8" viewBox="0 0 8 8"><path d="M7.5 0.5 V7.5 H0.5 Z" fill="#333"/></svg>
<div class="r" style="left:131px;top:493px;width:784px;height:454px;background:#ffffff;"></div>
<div class="r" style="left:131px;top:493px;width:784px;height:1px;background:#1a7ad4;"></div>
<div class="r" style="left:131px;top:493px;width:1px;height:454px;background:#1a7ad4;"></div>
<div class="r" style="left:915px;top:493px;width:6px;height:454px;background:#f4f4f4;"></div>
<div class="r" style="left:132px;top:512px;width:783px;height:0;border-top:1px dashed #c4c4c4"></div>
<div class="r" style="left:160px;top:494px;width:0;height:453px;border-left:1px dashed #c4c4c4"></div>
<div class="r" style="left:124px;top:949px;width:797px;height:1px;background:#a9a9a9;"></div>
<div class="r" style="left:124px;top:950px;width:791px;height:24px;background:#f0f0f0;"></div>
<div class="t" style="left:128.00px;top:958.00px;font-size:12px;color:#333;font-weight:normal;letter-spacing:-0.589px;">Page:</div>
<div class="r" style="left:159px;top:953px;width:30px;height:17px;background:#f4f4f4;border:1px solid #9a9a9a;box-sizing:border-box"></div>
<div class="t" style="left:171.00px;top:957.00px;font-size:12px;color:#333;font-weight:normal;">1</div>
<div class="t" style="left:192.00px;top:957.00px;font-size:12px;color:#333;font-weight:normal;letter-spacing:-0.172px;">/ 1</div>
<div class="t" style="left:732.00px;top:957.00px;font-size:11.6px;color:#333;font-weight:normal;letter-spacing:-0.558px;">100%</div>
<div class="r" style="left:767px;top:960px;width:8px;height:2px;background:#333;"></div>
<div class="r" style="left:781px;top:960px;width:114px;height:2px;background:#c6c6c6;"></div>
<div class="r" style="left:836px;top:955px;width:5px;height:14px;background:#444;"></div>
<div class="r" style="left:786px;top:966px;width:1px;height:3px;background:#bbb;"></div>
<div class="r" style="left:891px;top:966px;width:1px;height:3px;background:#bbb;"></div>
<svg class="r" style="left:901px;top:957px;" width="9" height="9" viewBox="0 0 9 9"><path d="M4.5 0 V9 M0 4.5 H9" stroke="#333" stroke-width="2"/></svg>
<svg class="r" style="left:160px;top:512px;" width="92" height="52" viewBox="0 0 92 52"><defs>
<radialGradient id="cr" cx="0.45" cy="0.4" r="0.6"><stop offset="0" stop-color="#faf6ee"/><stop offset="1" stop-color="#ede5d6"/></radialGradient>
<linearGradient id="cn" x1="0" y1="0" x2="0" y2="1"><stop offset="0" stop-color="#e0dbd0"/><stop offset="1" stop-color="#a9a59c"/></linearGradient>
</defs>
<rect width="92" height="52" fill="#140c08"/>
<path d="M0 32 H92 V52 H0 Z" fill="#8a5229"/>
<path d="M0 42 H92 V52 H0 Z" fill="#7a4a26"/>
<path d="M0 43 H30 L25 52 H0 Z" fill="#d9d5cd"/>
<path d="M57 0 H92 V22 Q88 26 80 28 L64 18 Q58 10 57 0 Z" fill="#e9e1d1"/>
<path d="M60 0 H92 V6 Q78 9 62 5 Z" fill="#f2ece0"/>
<path d="M60 28 Q66 40 63 52 M64 28 Q70 40 67 52" stroke="#8d8a85" stroke-width="1" fill="none"/>
<path d="M5 18 Q16 44 28 52 H50 Q66 38 76 18 Z" fill="url(#cn)"/>
<ellipse cx="40" cy="17" rx="36.5" ry="14" fill="none" stroke="#55524e" stroke-width="1.3"/>
<ellipse cx="42" cy="19" rx="31" ry="12.5" fill="url(#cr)"/>
<path d="M10 24 Q40 40 74 24" stroke="#f0ebe2" stroke-width="2.2" fill="none"/>
<ellipse cx="46" cy="20" rx="7" ry="4.5" fill="#5d3a24" opacity="0.9"/>
<ellipse cx="45" cy="20" rx="13" ry="7" fill="#7a5840" opacity="0.35"/>
<rect x="28" y="0" width="8" height="6" fill="#9c9c9c" opacity="0.7"/></svg>
<div class="t" style="left:528.70px;top:515.00px;font-size:12px;color:#111;font-weight:normal;letter-spacing:-0.469px;">ALWAZONSALE</div>
<div class="t" style="left:528.70px;top:531.00px;font-size:12px;color:#111;font-weight:normal;letter-spacing:-0.362px;">15 Pearlman DR</div>
<div class="t" style="left:528.70px;top:546.00px;font-size:12px;color:#111;font-weight:normal;letter-spacing:-0.252px;">Spring Valley NY 10977</div>
<div class="t" style="left:727.00px;top:516.00px;font-size:12px;color:#111;font-weight:normal;letter-spacing:-0.081px;"><b>P:</b> 12-34-56-78</div>
<div class="t" style="left:727.00px;top:531.00px;font-size:12px;color:#111;font-weight:normal;letter-spacing:-0.056px;"><b>E:</b> office@squid.com</div>
<div class="t" style="left:727.00px;top:547.00px;font-size:12px;color:#111;font-weight:normal;letter-spacing:0.032px;"><b>F:</b> 718-215-1111</div>
<div class="r" style="left:160px;top:570px;width:755px;height:1px;background:#c8c8c8;"></div>
<div class="t" style="left:160.00px;top:575.00px;font-size:12px;color:#111;font-weight:bold;letter-spacing:-0.068px;">Pick Order PC-0000611</div>
<div class="t" style="left:343.00px;top:575.00px;font-size:12px;color:#111;font-weight:bold;letter-spacing:-0.377px;">Customer:</div>
<div class="t" style="left:404.00px;top:575.00px;font-size:12px;color:#111;font-weight:normal;">0</div>
<div class="t" style="right:1004px;top:575.00px;font-size:12px;color:#111;font-weight:normal;letter-spacing:-0.438px;">Page 1 of 1</div>
<div class="r" style="left:160px;top:591px;width:755px;height:1px;background:#c8c8c8;"></div>
<svg class="r" style="left:161px;top:610px;" width="217" height="29" viewBox="0 0 217 29"><rect x="0" y="0" width="2" height="29" fill="#000"/><rect x="4" y="0" width="2" height="29" fill="#000"/><rect x="14" y="0" width="3" height="29" fill="#000"/><rect x="21" y="0" width="2" height="29" fill="#000"/><rect x="26" y="0" width="4" height="29" fill="#000"/><rect x="33" y="0" width="1" height="29" fill="#000"/><rect x="36" y="0" width="2" height="29" fill="#000"/><rect x="42" y="0" width="3" height="29" fill="#000"/><rect x="48" y="0" width="1" height="29" fill="#000"/><rect x="53" y="0" width="4" height="29" fill="#000"/><rect x="59" y="0" width="1" height="29" fill="#000"/><rect x="63" y="0" width="2" height="29" fill="#000"/><rect x="67" y="0" width="1" height="29" fill="#000"/><rect x="71" y="0" width="2" height="29" fill="#000"/><rect x="77" y="0" width="3" height="29" fill="#000"/><rect x="84" y="0" width="1" height="29" fill="#000"/><rect x="88" y="0" width="2" height="29" fill="#000"/><rect x="93" y="0" width="1" height="29" fill="#000"/><rect x="99" y="0" width="2" height="29" fill="#000"/><rect x="104" y="0" width="4" height="29" fill="#000"/><rect x="110" y="0" width="1" height="29" fill="#000"/><rect x="114" y="0" width="3" height="29" fill="#000"/><rect x="119" y="0" width="1" height="29" fill="#000"/><rect x="124" y="0" width="4" height="29" fill="#000"/><rect x="131" y="0" width="3" height="29" fill="#000"/><rect x="136" y="0" width="2" height="29" fill="#000"/><rect x="141" y="0" width="1" height="29" fill="#000"/><rect x="146" y="0" width="2" height="29" fill="#000"/><rect x="150" y="0" width="2" height="29" fill="#000"/><rect x="155" y="0" width="3" height="29" fill="#000"/><rect x="162" y="0" width="2" height="29" fill="#000"/><rect x="167" y="0" width="4" height="29" fill="#000"/><rect x="174" y="0" width="2" height="29" fill="#000"/><rect x="180" y="0" width="2" height="29" fill="#000"/><rect x="186" y="0" width="3" height="29" fill="#000"/><rect x="193" y="0" width="3" height="29" fill="#000"/><rect x="199" y="0" width="1" height="29" fill="#000"/><rect x="203" y="0" width="2" height="29" fill="#000"/><rect x="208" y="0" width="1" height="29" fill="#000"/><rect x="212" y="0" width="2" height="29" fill="#000"/></svg>
<div class="t" style="left:160.00px;top:650.00px;font-size:19px;color:#111;font-weight:bold;letter-spacing:0.399px;">Pick Order PC-0000611</div>
<div class="r" style="left:563px;top:610px;width:352px;height:72px;background:#ffffff;border:1px solid #c8c8c8;border-right:none;box-sizing:border-box"></div>
<div class="r" style="left:564px;top:611px;width:351px;height:25px;background:#f5f5f5;"></div>
<div class="t" style="left:571.00px;top:618.00px;font-size:12px;color:#111;font-weight:bold;letter-spacing:-0.245px;">Customer</div>
<div class="t" style="left:571.00px;top:644.00px;font-size:12px;color:#111;font-weight:normal;">0</div>
<div class="t" style="left:571.00px;top:658.00px;font-size:12px;color:#111;font-weight:normal;letter-spacing:-0.002px;">SHO-0047665</div>
<div class="r" style="left:160px;top:698px;width:755px;height:61px;background:#ffffff;border:1px solid #c8c8c8;border-right:none;box-sizing:border-box"></div>
<div class="r" style="left:161px;top:699px;width:754px;height:26px;background:#f5f5f5;"></div>
<div class="r" style="left:538px;top:699px;width:1px;height:59px;background:#c8c8c8;"></div>
<div class="t" style="left:168.60px;top:706.00px;font-size:12px;color:#111;font-weight:bold;letter-spacing:-0.139px;">Date</div>
<div class="t" style="left:546.70px;top:706.00px;font-size:12px;color:#111;font-weight:bold;letter-spacing:-0.505px;">Picker</div>
<div class="t" style="left:168.60px;top:735.00px;font-size:12px;color:#111;font-weight:normal;letter-spacing:-0.051px;">09/27/2021</div>
<div class="t" style="left:161.00px;top:777.00px;font-size:12px;color:#111;font-weight:normal;letter-spacing:-0.918px;">ITEMS</div>
<div class="r" style="left:160px;top:802px;width:755px;height:58px;background:#024f88;"></div>
<div class="r" style="left:188px;top:802px;width:1px;height:124px;background:#dcdcdc;"></div>
<div class="r" style="left:267px;top:802px;width:1px;height:124px;background:#dcdcdc;"></div>
<div class="r" style="left:398px;top:802px;width:1px;height:124px;background:#dcdcdc;"></div>
<div class="r" style="left:484px;top:802px;width:1px;height:124px;background:#dcdcdc;"></div>
<div class="r" style="left:553px;top:802px;width:1px;height:124px;background:#dcdcdc;"></div>
<div class="r" style="left:609px;top:802px;width:1px;height:124px;background:#dcdcdc;"></div>
<div class="r" style="left:675px;top:802px;width:1px;height:124px;background:#dcdcdc;"></div>
<div class="r" style="left:723px;top:802px;width:1px;height:124px;background:#dcdcdc;"></div>
<div class="r" style="left:802px;top:802px;width:1px;height:124px;background:#dcdcdc;"></div>
<div class="r" style="left:865px;top:802px;width:1px;height:124px;background:#dcdcdc;"></div>
<div class="r" style="left:160px;top:860px;width:1px;height:66px;background:#dcdcdc;"></div>
<div class="r" style="left:160px;top:925px;width:755px;height:1px;background:#dcdcdc;"></div>
<div class="t" style="left:170.00px;top:825.00px;font-size:12px;color:#ffffff;font-weight:bold;">#</div>
<div class="t" style="left:196.40px;top:825.00px;font-size:12px;color:#ffffff;font-weight:bold;letter-spacing:0.543px;">Item</div>
<div class="t" style="left:275.00px;top:825.00px;font-size:12px;color:#ffffff;font-weight:bold;letter-spacing:-0.171px;">Description</div>
<div class="t" style="left:406.50px;top:825.00px;font-size:12px;color:#ffffff;font-weight:bold;letter-spacing:-0.429px;">Location</div>
<div class="t" style="left:491.80px;top:825.00px;font-size:12px;color:#ffffff;font-weight:bold;letter-spacing:0.098px;">Order Qty</div>
<div class="t" style="left:562.00px;top:809.00px;font-size:12px;color:#ffffff;font-weight:bold;letter-spacing:-0.236px;">Pick</div>
<div class="t" style="left:562.00px;top:825.00px;font-size:12px;color:#ffffff;font-weight:bold;letter-spacing:-0.044px;">Order</div>
<div class="t" style="left:562.00px;top:841.00px;font-size:12px;color:#ffffff;font-weight:bold;letter-spacing:-0.002px;">Qty</div>
<div class="t" style="left:617.70px;top:817.00px;font-size:12px;color:#ffffff;font-weight:bold;letter-spacing:-0.314px;">Avail.</div>
<div class="t" style="left:617.70px;top:833.00px;font-size:12px;color:#ffffff;font-weight:bold;letter-spacing:-0.002px;">Qty</div>
<div class="t" style="left:684.60px;top:825.00px;font-size:12px;color:#ffffff;font-weight:bold;letter-spacing:0.002px;">UOM</div>
<div class="t" style="left:732.00px;top:817.00px;font-size:12px;color:#ffffff;font-weight:bold;letter-spacing:-0.176px;">Units per</div>
<div class="t" style="left:732.00px;top:833.00px;font-size:12px;color:#ffffff;font-weight:bold;letter-spacing:-0.233px;">case</div>
<div class="t" style="left:810.80px;top:817.00px;font-size:12px;color:#ffffff;font-weight:bold;letter-spacing:-0.338px;">Picked</div>
<div class="t" style="left:810.80px;top:833.00px;font-size:12px;color:#ffffff;font-weight:bold;letter-spacing:-0.002px;">Qty</div>
<div class="t" style="left:874.30px;top:825.00px;font-size:12px;color:#ffffff;font-weight:bold;letter-spacing:-0.303px;">Pallet</div>
<div class="t" style="left:170.00px;top:887.00px;font-size:12px;color:#111;font-weight:normal;">1</div>
<div class="t" style="left:196.40px;top:870.00px;font-size:12px;color:#111;font-weight:normal;">0</div>
<div class="t" style="left:275.00px;top:870.00px;font-size:12px;color:#111;font-weight:normal;letter-spacing:-0.120px;">Dog Bulldog Squad</div>
<div class="t" style="left:275.00px;top:886.00px;font-size:12px;color:#111;font-weight:normal;letter-spacing:-0.076px;">Women's V-Neck T-</div>
<div class="t" style="left:275.00px;top:901.00px;font-size:12px;color:#111;font-weight:normal;letter-spacing:-0.268px;">Shirt</div>
<div class="t" style="left:406.50px;top:870.00px;font-size:12px;color:#111;font-weight:normal;letter-spacing:-0.209px;">blue wagan</div>
<div class="t" style="left:492.00px;top:870.00px;font-size:12px;color:#111;font-weight:normal;">2</div>
<div class="t" style="left:562.00px;top:870.00px;font-size:12px;color:#111;font-weight:normal;">2</div>
<div class="t" style="right:1252px;top:870.00px;font-size:12px;color:#111;font-weight:normal;">2</div>
<div class="t" style="left:700.00px;top:870.00px;font-size:12px;color:#111;font-weight:normal;letter-spacing:-0.840px;">3.3</div>
<div class="t" style="right:1125px;top:870.00px;font-size:12px;color:#111;font-weight:normal;">6</div>
<div class="r" style="left:707px;top:781px;width:226px;height:145px;border:4px solid #fa5a4a;box-sizing:border-box;filter:drop-shadow(2px 2px 1.5px rgba(0,0,0,0.85))"></div>
<div class="r" style="left:1616px;top:322px;width:303px;height:108px;border:4px solid #fa5a4a;box-sizing:border-box;filter:drop-shadow(2px 2px 1.5px rgba(0,0,0,0.85))"></div>
</body></html>
